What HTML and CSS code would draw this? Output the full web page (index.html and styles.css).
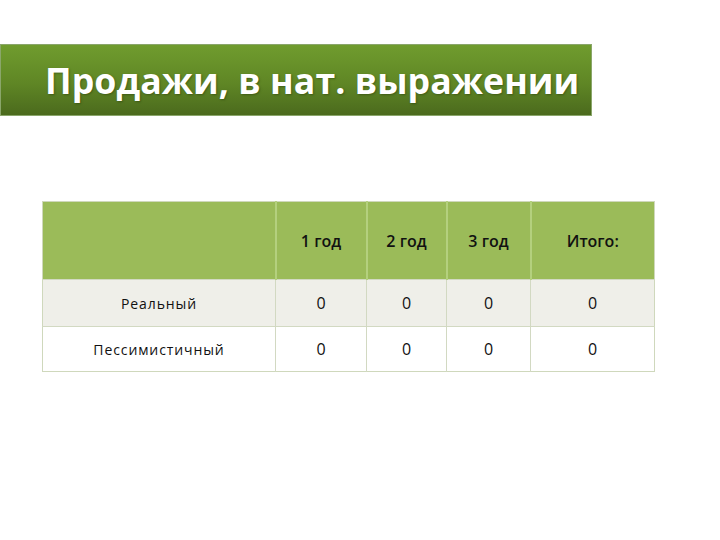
FILE: index.html
```html
<!DOCTYPE html>
<html>
<head>
<meta charset="utf-8">
<link rel="stylesheet" href="styles.css">
</head>
<body>
<div class="slide">
  <div class="banner"><h1 class="title">Продажи, в нат. выражении</h1></div>
  <table class="grid">
    <colgroup>
      <col class="c0"><col class="c1"><col class="c2"><col class="c3"><col class="c4">
    </colgroup>
    <thead>
      <tr class="head"><th></th><th>1 год</th><th>2 год</th><th>3 год</th><th>Итого:</th></tr>
    </thead>
    <tbody>
      <tr class="r1"><td class="label">Реальный</td><td>0</td><td>0</td><td>0</td><td>0</td></tr>
      <tr class="r2"><td class="label">Пессимистичный</td><td>0</td><td>0</td><td>0</td><td>0</td></tr>
    </tbody>
  </table>
</div>
</body>
</html>
```
FILE: styles.css
```css
html, body {
  margin: 0;
  padding: 0;
  background: #ffffff;
}
.slide {
  width: 720px;
  height: 540px;
  padding-top: 44px;
  box-sizing: border-box;
  font-family: "Open Sans", "Liberation Sans", sans-serif;
}
.banner {
  width: 592px;
  height: 72px;
  box-sizing: border-box;
  background: linear-gradient(to bottom, #709c2e 0%, #5f8625 55%, #4b6a1d 100%);
  border: 1px solid #8aa66a;
  display: flex;
  align-items: center;
  padding-left: 44px;
}
.title {
  margin: 0;
  color: #ffffff;
  font-size: 35.7px;
  font-weight: 700;
  letter-spacing: 0.05px;
  text-shadow: 1px 1px 2px rgba(40, 60, 10, 0.5);
  white-space: nowrap;
}
.grid {
  margin: 85px 0 0 42px;
  border-collapse: collapse;
  table-layout: fixed;
  width: 612px;
  border: 1px solid #cfd8bc;
}
.c0 { width: 233px; }
.c1 { width: 91px; }
.c2 { width: 80px; }
.c3 { width: 84px; }
.c4 { width: 124px; }
.grid th, .grid td {
  padding: 0;
  text-align: center;
  color: #111111;
}
.head th {
  height: 77px;
  background: #9bbb59;
  font-weight: 600;
  font-size: 16px;
  border-left: 2px solid #b4d07e;
}
.head th:first-child { border-left: none; }
.grid td {
  font-size: 16px;
  border-left: 1px solid #d2d9c2;
  border-top: 1px solid #d2d9c2;
}
.grid td.label {
  font-size: 14px;
  letter-spacing: 0.9px;
  border-left: none;
}
.r1 td {
  height: 46px;
  background: #efefe9;
}
.r2 td {
  height: 44px;
  background: #ffffff;
}
```
